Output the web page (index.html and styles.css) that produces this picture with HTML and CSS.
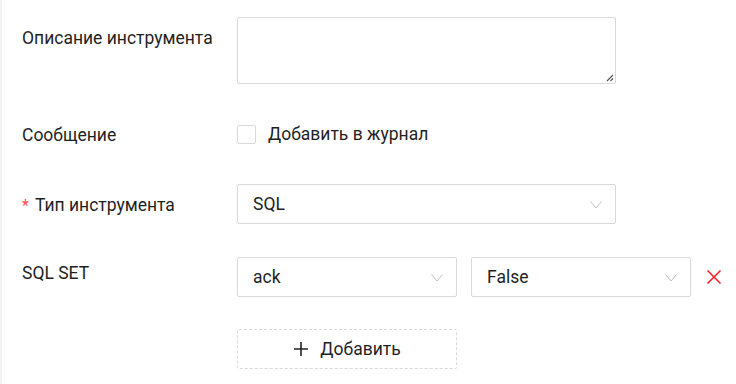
FILE: index.html
```html
<!DOCTYPE html>
<html>
<head>
<meta charset="utf-8">
<link rel="stylesheet" href="styles.css">
</head>
<body>
<div class="page">
  <form class="form">
    <div class="row row-desc">
      <div class="label">Описание инструмента</div>
      <div class="control">
        <div class="textarea">
          <svg class="resize" width="8" height="8" viewBox="0 0 8 8"><path d="M7 1L1 7M7 4.5L4.5 7" stroke="#555" stroke-width="1.2" fill="none"/></svg>
        </div>
      </div>
    </div>
    <div class="row row-msg">
      <div class="label">Сообщение</div>
      <div class="control check-line">
        <span class="checkbox"></span>
        <span class="check-text">Добавить в журнал</span>
      </div>
    </div>
    <div class="row row-type">
      <div class="label"><span class="req">*</span>Тип инструмента</div>
      <div class="control">
        <div class="select wide">
          <span>SQL</span>
          <svg class="chev" width="12" height="8" viewBox="0 0 12 8"><path d="M0.5 0.5L6 7L11.5 0.5" stroke="#bfbfbf" stroke-width="1" fill="none"/></svg>
        </div>
      </div>
    </div>
    <div class="row row-set">
      <div class="label label-set">SQL SET</div>
      <div class="control set-line">
        <div class="select half">
          <span>ack</span>
          <svg class="chev" width="12" height="8" viewBox="0 0 12 8"><path d="M0.5 0.5L6 7L11.5 0.5" stroke="#bfbfbf" stroke-width="1" fill="none"/></svg>
        </div>
        <div class="select half">
          <span>False</span>
          <svg class="chev" width="12" height="8" viewBox="0 0 12 8"><path d="M0.5 0.5L6 7L11.5 0.5" stroke="#bfbfbf" stroke-width="1" fill="none"/></svg>
        </div>
        <svg class="del" width="16" height="16" viewBox="0 0 16 16"><path d="M1.5 1.5L14.5 14.5M14.5 1.5L1.5 14.5" stroke="#f5222d" stroke-width="1.6" fill="none"/></svg>
      </div>
    </div>
    <div class="row row-add">
      <div class="label"></div>
      <div class="control">
        <div class="add-btn">
          <svg width="16" height="16" viewBox="0 0 16 16"><path d="M8 1V15M1 8H15" stroke="#222" stroke-width="1.6" fill="none"/></svg>
          <span>Добавить</span>
        </div>
      </div>
    </div>
  </form>
</div>
</body>
</html>
```

FILE: styles.css
```css
* { box-sizing: border-box; }
html, body { margin: 0; padding: 0; background: #fff; }
body {
  font-family: Roboto, "Liberation Sans", Arial, sans-serif;
  color: #1f1f1f;
  font-size: 17.5px;
}
.page {
  width: 736px;
  height: 384px;
  border-left: 2px solid #f2f2f2;
  overflow: hidden;
}
.form {
  display: flex;
  flex-direction: column;
  padding-top: 17px;
  padding-left: 20px;
}
.row {
  display: grid;
  grid-template-columns: 215px 1fr;
  align-items: start;
}
.row-desc { height: 66px; }
.row-msg { margin-top: 31px; height: 40px; }
.row-type { margin-top: 30px; height: 40px; }
.row-set { margin-top: 33px; height: 40px; }
.row-add { margin-top: 32px; height: 40px; }
.label {
  line-height: 42px;
  white-space: nowrap;
}
.label-set { line-height: 32px; }
.req {
  color: #ff4d4f;
  margin-right: 6px;
  font-size: 16px;
}
.textarea {
  position: relative;
  width: 379px;
  height: 67px;
  border: 1px solid #d9d9d9;
  border-radius: 2px;
}
.resize {
  position: absolute;
  right: 1px;
  bottom: 1px;
}
.check-line {
  display: flex;
  align-items: center;
  height: 40px;
}
.checkbox {
  width: 19px;
  height: 19px;
  border: 1px solid #d9d9d9;
  border-radius: 2px;
  margin-right: 12px;
}
.select {
  display: flex;
  align-items: center;
  justify-content: space-between;
  height: 40px;
  border: 1px solid #d9d9d9;
  border-radius: 2px;
  padding: 0 13px 0 15px;
}
.select.wide { width: 379px; }
.select.half { width: 220px; }
.chev { margin-top: 1px; }
.set-line {
  display: flex;
  align-items: center;
  gap: 14px;
}
.del { margin-left: 1px; }
.add-btn {
  display: flex;
  align-items: center;
  justify-content: center;
  gap: 11px;
  width: 220px;
  height: 40px;
  border: 1px dashed #d9d9d9;
  border-radius: 2px;
}
```
